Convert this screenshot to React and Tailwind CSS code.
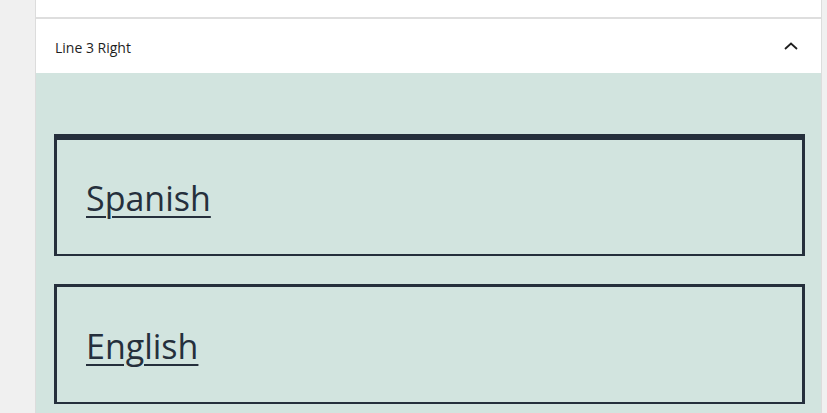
import React from "react";

const languages = [
  { name: "Spanish", box: "h-[122px] border-t-[6px]" },
  { name: "English", box: "h-[120px] border-t-[3px]" },
];

export default function App() {
  return (
    <div className="h-[413px] w-[827px] overflow-hidden bg-[#f0f0f0] flex pl-[35px] pr-[5px] font-['Open_Sans',sans-serif]">
      <div className="flex-1 flex flex-col bg-white border-x border-[#dcdcdc]">
        {/* previous panel tail */}
        <div className="h-[19px] shrink-0 border-b-2 border-[#dedede]" />

        {/* panel header */}
        <div className="h-[54px] shrink-0 flex items-center justify-between pl-[19px] pr-[23px]">
          <span className="text-[14px] text-[#1e1e1e] pt-[3px]">Line 3 Right</span>
          <svg width="14" height="8" viewBox="0 0 14 8" fill="none">
            <path d="M1 7 L7 1.5 L13 7" stroke="#1e1e1e" strokeWidth="1.8" />
          </svg>
        </div>

        {/* panel body */}
        <div className="flex-1 bg-[#d2e4df] pt-[61px] pl-[18px] pr-[16px] flex flex-col gap-[28px]">
          {languages.map((lang) => (
            <div
              key={lang.name}
              className={`${lang.box} shrink-0 flex items-center pl-[29px] pt-[2px] border-x-[3px] border-b-2 border-[#252f3c]`}
            >
              <a href="#" className="text-[34px] leading-none text-[#252f3c] underline decoration-2 underline-offset-[5px]">
                {lang.name}
              </a>
            </div>
          ))}
        </div>
      </div>
    </div>
  );
}
